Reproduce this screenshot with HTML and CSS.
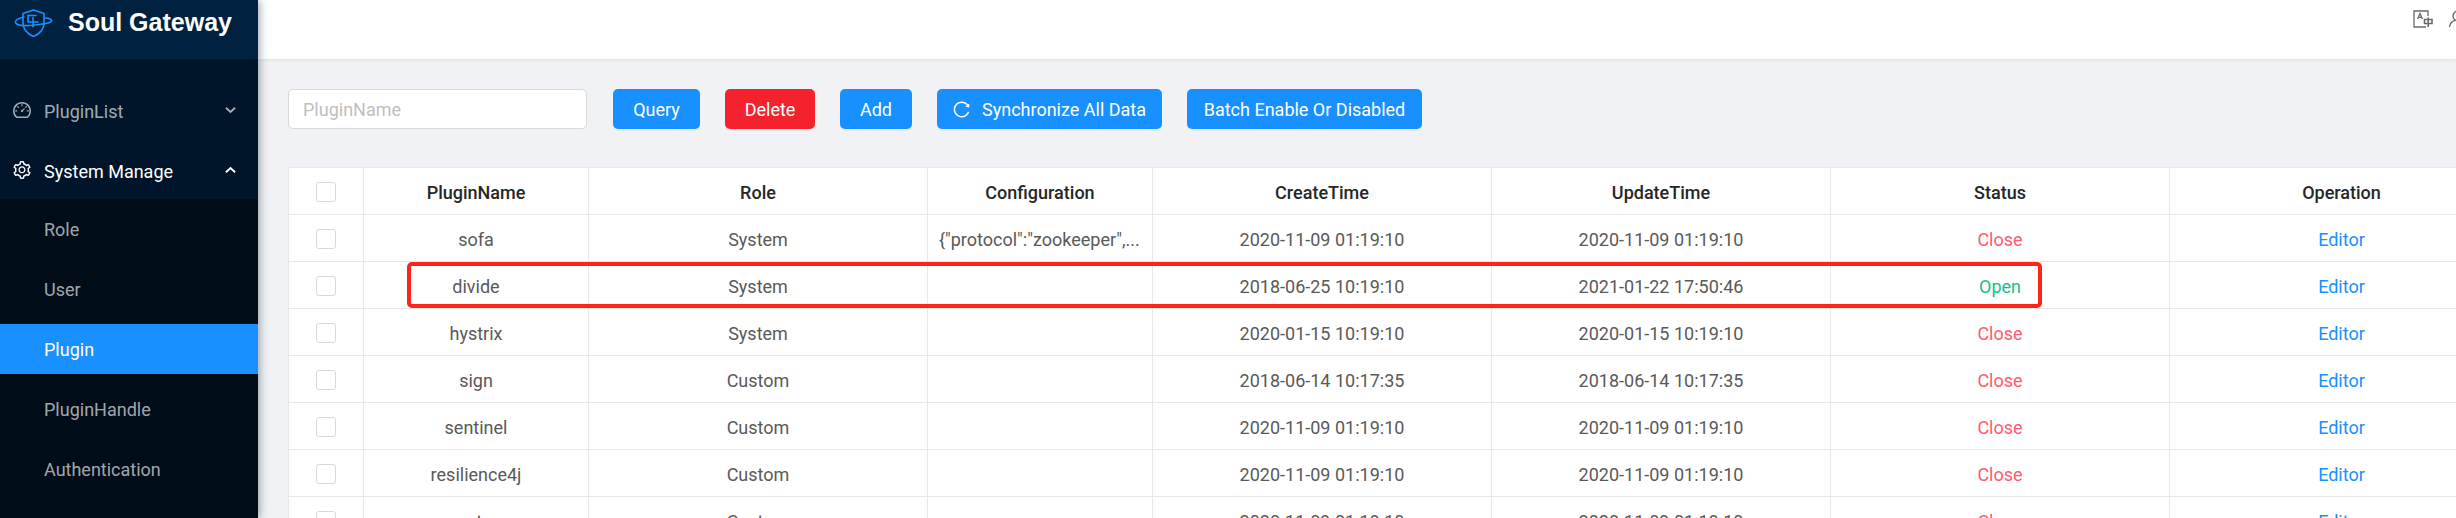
FILE: index.html
```html
<!DOCTYPE html>
<html lang="en">
<head>
<meta charset="utf-8">
<title>Soul Gateway</title>
<link rel="stylesheet" href="styles.css">
</head>
<body>
<div class="layout">
  <aside class="sider">
    <div class="logo">
      <svg class="logo-icon" viewBox="14 7 40 32" fill="none" stroke="#1890ff" stroke-width="1.6" stroke-linecap="round" stroke-linejoin="round">
        <path d="M33.5 10 44 13.5V23C44 30 38 34.5 33.5 36.5 29 34.5 23 30 23 23V13.5Z"/>
        <path d="M24 17C18 18.5 15 20.5 15.5 22.5 16.5 26 27 26 35 25 44 24 52 23 51.5 20.5 51 18.5 48 18 45 18"/>
        <path d="M33 17.5V27M28.5 22H38M36 15.5H28V22"/>
      </svg>
      <span class="logo-text">Soul Gateway</span>
    </div>
    <nav class="menu">
      <div class="menu-title">
        <svg class="menu-icon" viewBox="64 64 896 896" fill="currentColor"><path d="M924.8 385.6a446.7 446.7 0 0 0-96-142.4 446.7 446.7 0 0 0-142.4-96C631.1 123.8 572.5 112 512 112s-119.1 11.8-174.4 35.2a446.7 446.7 0 0 0-142.4 96 446.7 446.7 0 0 0-96 142.4C75.8 440.9 64 499.5 64 560c0 132.7 58.3 257.7 159.9 343.1l1.7 1.4c5.8 4.8 13.1 7.5 20.6 7.5h531.7c7.5 0 14.8-2.7 20.6-7.5l1.7-1.4C901.7 817.7 960 692.7 960 560c0-60.5-11.9-119.1-35.2-174.4zM761.4 836H262.6A371.12 371.12 0 0 1 140 560c0-99.4 38.7-192.8 109-263 70.3-70.3 163.7-109 263-109 99.4 0 192.8 38.7 263 109 70.3 70.3 109 163.7 109 263 0 105.6-44.5 205.5-122.6 276zM623.5 421.5a8.03 8.03 0 0 0-11.3 0L527.7 506c-18.7-5-39.4-.2-54.1 14.5a55.95 55.95 0 0 0 0 79.2 55.95 55.95 0 0 0 79.2 0 55.87 55.87 0 0 0 14.5-54.1l84.5-84.5c3.1-3.1 3.1-8.2 0-11.3l-28.3-28.3zM490 320h44c4.4 0 8-3.6 8-8v-80c0-4.4-3.6-8-8-8h-44c-4.4 0-8 3.6-8 8v80c0 4.4 3.6 8 8 8zm260 218v44c0 4.4 3.6 8 8 8h80c4.4 0 8-3.6 8-8v-44c0-4.4-3.6-8-8-8h-80c-4.4 0-8 3.6-8 8zm12.7-197.2l-31.1-31.1a8.03 8.03 0 0 0-11.3 0l-56.6 56.6a8.03 8.03 0 0 0 0 11.3l31.1 31.1c3.1 3.1 8.2 3.1 11.3 0l56.6-56.6c3.1-3.1 3.1-8.2 0-11.3zm-458.6-31.1a8.03 8.03 0 0 0-11.3 0l-31.1 31.1a8.03 8.03 0 0 0 0 11.3l56.6 56.6c3.1 3.1 8.2 3.1 11.3 0l31.1-31.1c3.1-3.1 3.1-8.2 0-11.3l-56.6-56.6zM262 530h-80c-4.4 0-8 3.6-8 8v44c0 4.4 3.6 8 8 8h80c4.4 0 8-3.6 8-8v-44c0-4.4-3.6-8-8-8z"/></svg>
        <span class="menu-label">PluginList</span>
        <svg class="chevron" viewBox="0 0 12 8" fill="none" stroke="currentColor" stroke-width="2"><path d="M1 1.5 6 6.2 11 1.5"/></svg>
      </div>
      <div class="menu-title menu-title-open">
        <svg class="menu-icon" viewBox="64 64 896 896" fill="currentColor"><path d="M924.8 625.7l-65.5-56c3.1-19 4.7-38.4 4.7-57.8s-1.6-38.8-4.7-57.8l65.5-56a32.03 32.03 0 0 0 9.3-35.2l-.9-2.6a443.74 443.74 0 0 0-79.7-137.9l-1.8-2.1a32.12 32.12 0 0 0-35.1-9.5l-81.3 28.9c-30-24.6-63.5-44-99.7-57.6l-15.7-85a32.05 32.05 0 0 0-25.8-25.7l-2.7-.5c-52.1-9.4-106.9-9.4-159 0l-2.7.5a32.05 32.05 0 0 0-25.8 25.7l-15.8 85.4a351.86 351.86 0 0 0-99 57.4l-81.9-29.1a32 32 0 0 0-35.1 9.5l-1.8 2.1a446.02 446.02 0 0 0-79.7 137.9l-.9 2.6c-4.5 12.5-.8 26.5 9.3 35.2l66.3 56.6c-3.1 18.8-4.6 38-4.6 57.1 0 19.2 1.5 38.4 4.6 57.1L99 625.5a32.03 32.03 0 0 0-9.3 35.2l.9 2.6c18.1 50.4 44.9 96.9 79.7 137.9l1.8 2.1a32.12 32.12 0 0 0 35.1 9.5l81.9-29.1c29.8 24.5 63.1 43.9 99 57.4l15.8 85.4a32.05 32.05 0 0 0 25.8 25.7l2.7.5a449.4 449.4 0 0 0 159 0l2.7-.5a32.05 32.05 0 0 0 25.8-25.7l15.7-85a350 350 0 0 0 99.7-57.6l81.3 28.9a32 32 0 0 0 35.1-9.5l1.8-2.1c34.8-41.1 61.6-87.5 79.7-137.9l.9-2.6c4.5-12.3.8-26.3-9.3-35zM788.3 465.9c2.5 15.1 3.8 30.6 3.8 46.1s-1.3 31-3.8 46.1l-6.6 40.1 74.7 63.9a370.03 370.03 0 0 1-42.6 73.6L721 702.8l-31.4 25.8c-23.9 19.6-50.5 35-79.3 45.8l-38.1 14.3-17.9 97a377.5 377.5 0 0 1-85 0l-17.9-97.2-37.8-14.5c-28.5-10.8-55-26.2-78.7-45.7l-31.4-25.9-93.4 33.2c-17-22.9-31.2-47.6-42.6-73.6l75.5-64.5-6.5-40c-2.4-14.9-3.7-30.3-3.7-45.5 0-15.3 1.2-30.6 3.7-45.5l6.5-40-75.5-64.5c11.3-26.1 25.6-50.7 42.6-73.6l93.4 33.2 31.4-25.9c23.7-19.5 50.2-34.9 78.7-45.7l37.9-14.3 17.9-97.2c28.1-3.2 56.8-3.2 85 0l17.9 97 38.1 14.3c28.7 10.8 55.4 26.2 79.3 45.8l31.4 25.8 92.8-32.9c17 22.9 31.2 47.6 42.6 73.6L781.8 426l6.5 39.9zM512 326c-97.2 0-176 78.8-176 176s78.8 176 176 176 176-78.8 176-176-78.8-176-176-176zm79.2 255.2A111.6 111.6 0 0 1 512 614c-29.9 0-58-11.7-79.2-32.8A111.6 111.6 0 0 1 400 502c0-29.9 11.7-58 32.8-79.2C454 401.6 482.1 390 512 390c29.9 0 58 11.6 79.2 32.8A111.6 111.6 0 0 1 624 502c0 29.9-11.7 58-32.8 79.2z"/></svg>
        <span class="menu-label">System Manage</span>
        <svg class="chevron" viewBox="0 0 12 8" fill="none" stroke="currentColor" stroke-width="2"><path d="M1 6.5 6 1.8 11 6.5"/></svg>
      </div>
      <div class="submenu">
        <div class="sub-item">Role</div>
        <div class="sub-item">User</div>
        <div class="sub-item sub-item-active">Plugin</div>
        <div class="sub-item">PluginHandle</div>
        <div class="sub-item">Authentication</div>
      </div>
    </nav>
  </aside>
  <div class="page">
    <header class="topbar">
      <svg class="translate-icon" viewBox="0 0 20 18" fill="none" stroke="#6a6a6a" stroke-width="1.3">
        <path d="M15 6V1H1V17H13"/>
        <path d="M4.5 9 7 3.5 9.5 9M5.4 7.3H8.6"/>
        <path d="M11.5 9.5H19V13.5H11.5ZM15.2 7.5V17" stroke-width="1.6"/>
      </svg>
      <svg class="user-icon" viewBox="0 0 20 18" fill="none" stroke="#6a6a6a" stroke-width="1.4">
        <circle cx="10" cy="6" r="5"/>
        <path d="M1.5 17C2 13 5 11 7 10.4"/>
      </svg>
    </header>
    <main class="content">
      <div class="toolbar">
        <input class="search" type="text" placeholder="PluginName">
        <button class="btn btn-query" type="button">Query</button>
        <button class="btn btn-danger btn-delete" type="button">Delete</button>
        <button class="btn btn-add" type="button">Add</button>
        <button class="btn btn-sync" type="button">
          <svg class="sync-icon" viewBox="64 64 896 896" fill="currentColor"><path d="M909.1 209.3l-56.4 44.1C775.8 155.1 656.2 92 521.9 92 290 92 102.3 279.5 102 511.5 101.7 743.7 289.8 932 521.9 932c181.3 0 335.8-115 394.6-276.1 1.5-4.2-.7-8.9-4.9-10.3l-56.7-19.5a8 8 0 0 0-10.1 4.8c-1.8 5-3.8 10-5.9 14.9-17.3 41-42.1 77.8-73.7 109.4A344.77 344.77 0 0 1 655.9 829c-42.3 17.9-87.4 27-133.8 27-46.5 0-91.5-9.1-133.8-27A341.5 341.5 0 0 1 279 755.2a342.16 342.16 0 0 1-73.7-109.4c-17.9-42.4-27-87.4-27-133.9s9.1-91.5 27-133.9c17.3-41 42.1-77.8 73.7-109.4 31.6-31.6 68.4-56.4 109.3-73.8 42.3-17.9 87.4-27 133.8-27 46.5 0 91.5 9.1 133.8 27a341.5 341.5 0 0 1 109.3 73.8c9.9 9.9 19.2 20.4 27.8 31.4l-60.2 47a8 8 0 0 0 3 14.1l175.6 43c5 1.2 9.9-2.6 9.9-7.7l.8-180.9c-.1-6.6-7.8-10.3-13-6.2z"/></svg>
          <span>Synchronize All Data</span>
        </button>
        <button class="btn btn-batch" type="button">Batch Enable Or Disabled</button>
      </div>
      <table class="grid">
        <colgroup>
          <col class="c-check"><col class="c-name"><col class="c-role"><col class="c-config"><col class="c-time"><col class="c-time"><col class="c-time"><col class="c-op">
        </colgroup>
        <thead>
          <tr><th><span class="check"></span></th><th>PluginName</th><th>Role</th><th>Configuration</th><th>CreateTime</th><th>UpdateTime</th><th>Status</th><th>Operation</th></tr>
        </thead>
        <tbody>
          <tr><td><span class="check"></span></td><td>sofa</td><td>System</td><td class="config">{"protocol":"zookeeper",...</td><td>2020-11-09 01:19:10</td><td>2020-11-09 01:19:10</td><td class="close">Close</td><td class="link">Editor</td></tr>
          <tr><td><span class="check"></span></td><td>divide</td><td>System</td><td></td><td>2018-06-25 10:19:10</td><td>2021-01-22 17:50:46</td><td class="open">Open</td><td class="link">Editor</td></tr>
          <tr><td><span class="check"></span></td><td>hystrix</td><td>System</td><td></td><td>2020-01-15 10:19:10</td><td>2020-01-15 10:19:10</td><td class="close">Close</td><td class="link">Editor</td></tr>
          <tr><td><span class="check"></span></td><td>sign</td><td>Custom</td><td></td><td>2018-06-14 10:17:35</td><td>2018-06-14 10:17:35</td><td class="close">Close</td><td class="link">Editor</td></tr>
          <tr><td><span class="check"></span></td><td>sentinel</td><td>Custom</td><td></td><td>2020-11-09 01:19:10</td><td>2020-11-09 01:19:10</td><td class="close">Close</td><td class="link">Editor</td></tr>
          <tr><td><span class="check"></span></td><td>resilience4j</td><td>Custom</td><td></td><td>2020-11-09 01:19:10</td><td>2020-11-09 01:19:10</td><td class="close">Close</td><td class="link">Editor</td></tr>
          <tr><td><span class="check"></span></td><td>motan</td><td>Custom</td><td></td><td>2020-11-09 01:19:10</td><td>2020-11-09 01:19:10</td><td class="close">Close</td><td class="link">Editor</td></tr>
        </tbody>
      </table>
    </main>
    <div class="highlight"></div>
  </div>
</div>
</body>
</html>
```
FILE: styles.css
```css
* { box-sizing: border-box; }
html, body { margin: 0; height: 100%; overflow: hidden; }
body {
  font-family: Roboto, "Noto Sans", sans-serif;
  font-size: 18px;
  color: #595959;
  background: #f0f2f5;
}
.layout { display: flex; height: 518px; overflow: hidden; }

.sider {
  flex: 0 0 258px;
  background: #001529;
  box-shadow: 2px 0 8px rgba(0, 21, 41, .35);
  position: relative;
  z-index: 2;
}
.logo {
  height: 59px;
  background: #002140;
  display: flex;
  align-items: flex-start;
  padding: 7px 0 0 14px;
}
.logo-icon { width: 40px; height: 32px; flex: none; }
.logo-text {
  margin-left: 14px;
  font: bold 25px/30px "Liberation Sans", Arial, sans-serif;
  color: #fff;
  white-space: nowrap;
}
.menu { padding-top: 26px; }
.menu-title {
  height: 50px;
  margin-bottom: 10px;
  display: flex;
  align-items: center;
  padding: 0 22px 0 13px;
  color: rgba(255, 255, 255, .65);
}
.menu-title-open { color: #fff; margin-bottom: 4px; }
.menu-icon { width: 18px; height: 18px; flex: none; }
.menu-label { margin-left: 13px; flex: 1; padding-top: 2px; }
.chevron { width: 11px; height: 8px; flex: none; }
.submenu { background: #000c17; padding-top: 5px; height: 320px; }
.sub-item {
  height: 50px;
  margin-bottom: 10px;
  padding: 1px 0 0 44px;
  line-height: 50px;
  color: rgba(255, 255, 255, .65);
}
.sub-item-active { background: #1890ff; color: #fff; }

.page { flex: 1; min-width: 0; position: relative; }
.topbar {
  height: 59px;
  background: #fff;
  box-shadow: 0 1px 4px rgba(0, 21, 41, .08);
  position: relative;
  display: flex;
  align-items: flex-start;
  padding: 10px 0 0 2155px;
  overflow: hidden;
}
.translate-icon { width: 20px; height: 18px; flex: none; }
.user-icon { width: 20px; height: 18px; flex: none; margin-left: 15px; }
.content { padding: 30px 0 0 30px; }
.toolbar { display: flex; align-items: center; height: 40px; margin-bottom: 38px; }
.search {
  width: 299px;
  height: 40px;
  border: 1px solid #d9d9d9;
  border-radius: 5px;
  padding: 1px 14px 0;
  margin-right: 26px;
  font: inherit;
  background: #fff;
  outline: none;
}
.search::placeholder { color: #bfbfbf; opacity: 1; }
.btn {
  height: 40px;
  border: 0;
  border-radius: 5px;
  background: #1890ff;
  color: #fff;
  font: inherit;
  padding: 1px 0 0;
  margin-right: 25px;
  box-shadow: 0 2px 0 rgba(0, 0, 0, .03);
  white-space: nowrap;
  display: inline-flex;
  align-items: center;
  justify-content: center;
  flex: none;
}
.btn-danger { background: #f5222d; }
.btn-query { width: 87px; }
.btn-delete { width: 90px; }
.btn-add { width: 72px; }
.btn-sync { width: 225px; }
.btn-batch { width: 235px; }
.sync-icon { width: 17px; height: 17px; margin-right: 12px; flex: none; }

.grid {
  table-layout: fixed;
  width: 2226px;
  border-collapse: separate;
  border-spacing: 0;
  background: #fff;
  border-left: 1px solid #e8e8e8;
  border-top: 1px solid #e8e8e8;
}
.c-check { width: 75px; }
.c-name { width: 225px; }
.c-role { width: 339px; }
.c-config { width: 225px; }
.c-time { width: 339px; }
.c-op { width: 344px; }
.grid th, .grid td {
  height: 47px;
  padding: 2px 11px 0;
  text-align: center;
  border-right: 1px solid #e8e8e8;
  border-bottom: 1px solid #e8e8e8;
  white-space: nowrap;
  overflow: hidden;
}
.grid th { font-weight: 500; color: #262626; }
.grid td.config { text-align: left; }
.check {
  display: block;
  width: 20px;
  height: 20px;
  margin: 0 auto;
  border: 1px solid #d9d9d9;
  border-radius: 3px;
  background: #fff;
}
.close { color: #ff5a6e; }
.open { color: #19be8b; }
.link { color: #1890ff; }

.highlight {
  position: absolute;
  left: 149px;
  top: 262px;
  width: 1635px;
  height: 46px;
  border: 4px solid #ff2419;
  border-radius: 5px;
  pointer-events: none;
}
```
